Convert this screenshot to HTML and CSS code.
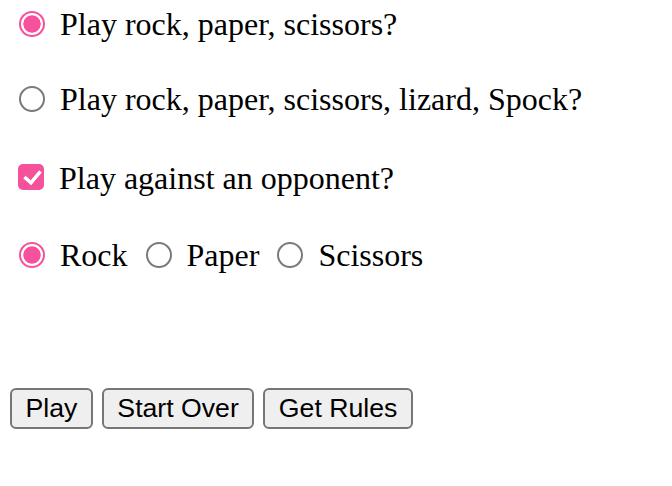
FILE: index.html
```html
<!DOCTYPE html>
<html>
<head>
<meta charset="utf-8">
<link rel="stylesheet" href="styles.css">
</head>
<body>
<div class="row row1">
  <label class="opt"><input type="radio" name="game" class="radio" checked><span>Play rock, paper, scissors?</span></label>
</div>
<div class="row row2">
  <label class="opt"><input type="radio" name="game" class="radio"><span>Play rock, paper, scissors, lizard, Spock?</span></label>
</div>
<div class="row row3">
  <label class="opt check-opt"><input type="checkbox" class="check" checked><span>Play against an opponent?</span></label>
</div>
<div class="row row4">
  <label class="opt"><input type="radio" name="move" class="radio" checked><span>Rock</span></label>
  <label class="opt"><input type="radio" name="move" class="radio"><span>Paper</span></label>
  <label class="opt"><input type="radio" name="move" class="radio"><span>Scissors</span></label>
</div>
<div class="buttons">
  <button class="btn">Play</button>
  <button class="btn">Start Over</button>
  <button class="btn">Get Rules</button>
</div>
</body>
</html>
```
FILE: styles.css
```css
html, body {
  margin: 0;
  padding: 0;
  background: #ffffff;
}
body {
  font-family: "Liberation Serif", "Times New Roman", serif;
  font-size: 32px;
  color: #000;
  padding-left: 19px;
}
.row {
  display: flex;
  align-items: center;
  height: 37px;
  line-height: 37px;
}
.row1 { margin-top: 6px; }
.row2 { margin-top: 38px; }
.row3 { margin-top: 42px; }
.row4 { margin-top: 40px; gap: 18px; }
.opt {
  display: flex;
  align-items: center;
  gap: 15px;
}
.check-opt { margin-left: -1px; }
.radio {
  appearance: none;
  -webkit-appearance: none;
  margin: 0;
  width: 26px;
  height: 26px;
  border-radius: 50%;
  border: 2px solid #7a7a7a;
  background: #fff;
  box-sizing: border-box;
  position: relative;
  top: -1px;
}
.radio:checked {
  border-color: #f5529b;
  background: radial-gradient(circle, #f5529b 0, #f5529b 8.3px, #fff 9px);
}
.check {
  appearance: none;
  -webkit-appearance: none;
  margin: 0;
  width: 26px;
  height: 26px;
  border-radius: 5px;
  background: #f5529b;
  box-sizing: border-box;
  position: relative;
  top: -2px;
}
.check::after {
  content: "";
  position: absolute;
  left: 8.5px;
  top: 3px;
  width: 7px;
  height: 13px;
  border-right: 4px solid #fff;
  border-bottom: 4px solid #fff;
  transform: rotate(40deg);
  border-radius: 1px;
}
.buttons {
  display: flex;
  gap: 9px;
  margin-top: 114px;
  margin-left: -9px;
}
.btn {
  font-family: "Liberation Sans", Arial, sans-serif;
  font-size: 26.67px;
  height: 41px;
  padding: 0 13.5px;
  margin: 0;
  border: 2px solid #767676;
  border-radius: 6px;
  background: #efefef;
  color: #000;
  line-height: 37px;
}
```
